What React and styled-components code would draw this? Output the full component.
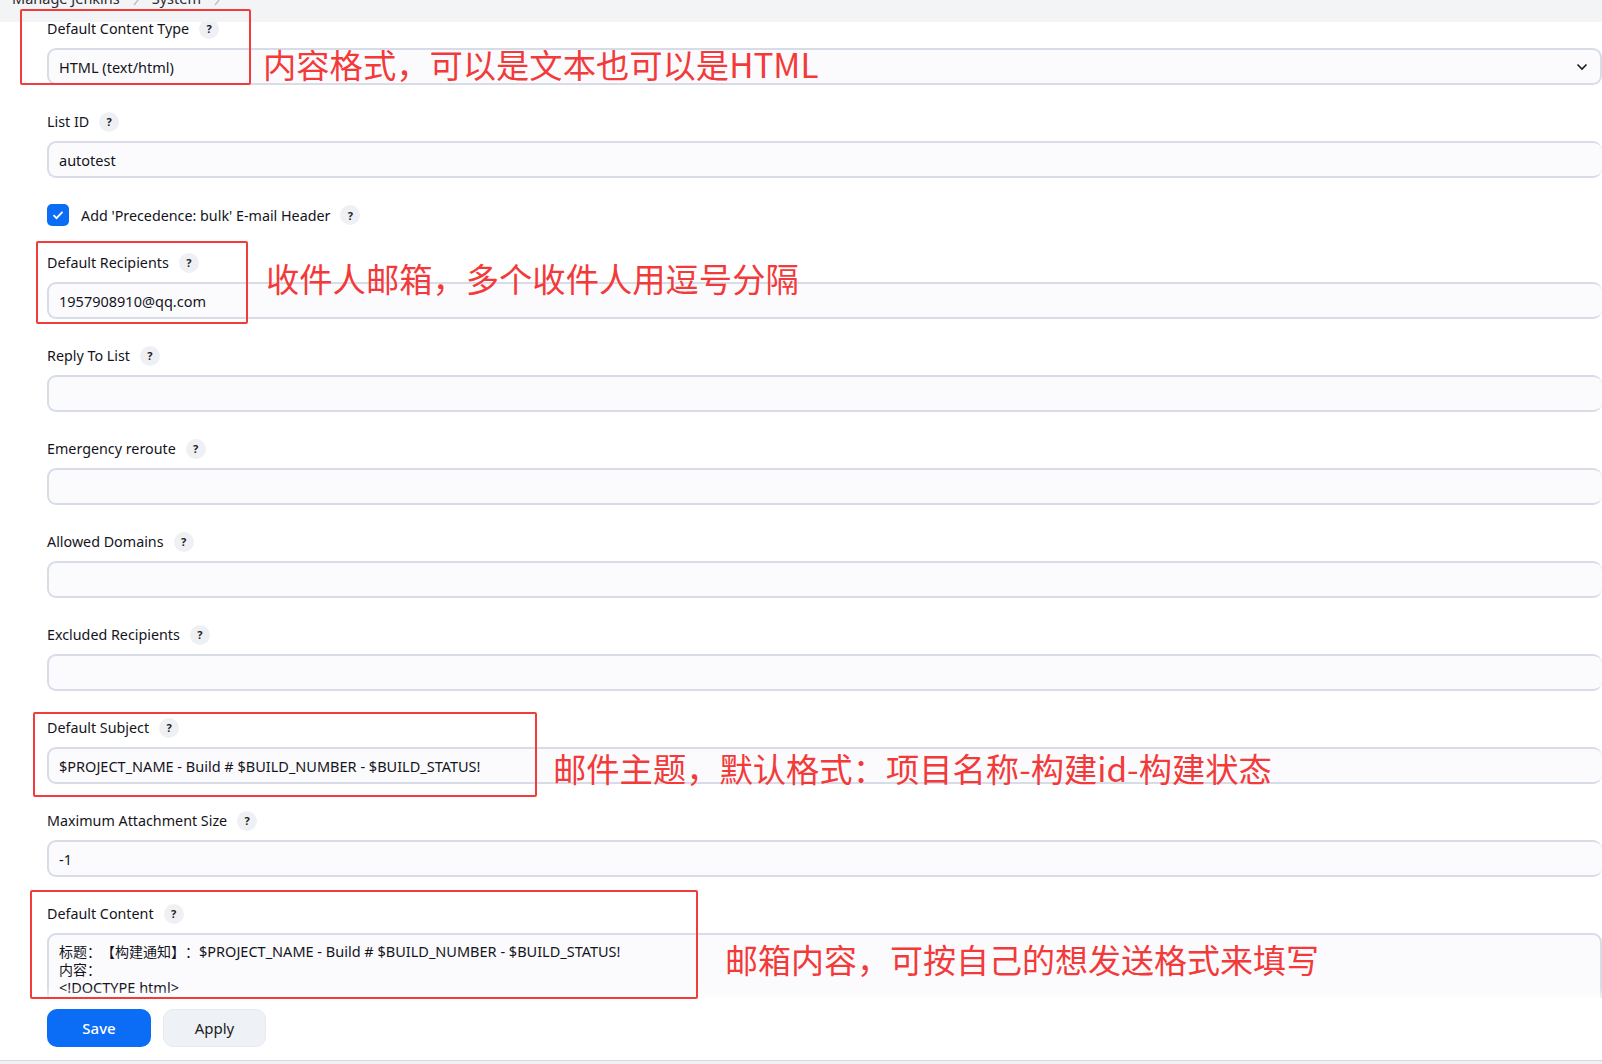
import React from "react";
import styled, { createGlobalStyle } from "styled-components";

const GlobalStyle = createGlobalStyle`
  html, body {
    margin: 0;
    padding: 0;
    background: #fff;
    overflow: hidden;
  }
  body {
    font-family: "Noto Sans", "Noto Sans CJK SC", sans-serif;
    color: #14141c;
    text-spacing-trim: space-all;
  }
  * { box-sizing: border-box; }
`;

const Page = styled.div`
  position: relative;
  width: 1602px;
  height: 1064px;
  overflow: hidden;
  display: flex;
  flex-direction: column;
  background: #fff;
`;

const Breadcrumbs = styled.div`
  height: 22px;
  flex-shrink: 0;
  background: #f3f4f6;
  display: flex;
  align-items: flex-start;
  gap: 12px;
  padding-left: 12px;
  overflow: hidden;
`;

const Crumb = styled.span`
  margin-top: -12px;
  font-size: 14.5px;
  line-height: 20px;
  color: #2a2a33;
`;

const CrumbSep = styled.svg`
  margin-top: -6px;
  width: 8px;
  height: 12px;
`;

const Main = styled.div`
  flex: 1;
  min-height: 0;
  overflow: hidden;
  padding-left: 47px;
  display: flex;
  flex-direction: column;
  gap: 30px;
`;

const Field = styled.div`
  display: flex;
  flex-direction: column;
  gap: 12px;
`;

const LabelRow = styled.div`
  height: 14px;
  display: flex;
  align-items: center;
  gap: 10px;
  font-size: 14.3px;
  line-height: 14px;
  color: #14141c;
`;

const Help = styled.span`
  width: 20px;
  height: 20px;
  border-radius: 50%;
  background: #eef0f4;
  display: inline-flex;
  align-items: center;
  justify-content: center;
  font-size: 11px;
  font-weight: 700;
  color: #222;
  flex-shrink: 0;
`;

const Box = styled.div`
  position: relative;
  height: 37px;
  border: 2px solid #d8dce7;
  border-right: ${({ $open }) => ($open ? "none" : "2px solid #d8dce7")};
  border-radius: 9px;
  background: #fbfbfd;
  padding: 0 10px;
  display: flex;
  align-items: center;
  font-size: 14.5px;
  color: #14141c;
  white-space: pre;
`;

const Chevron = styled.svg`
  margin-left: auto;
  margin-right: 2px;
  width: 12px;
  height: 8px;
`;

const TextArea = styled.div`
  height: 120px;
  border: 2px solid #d8dce7;
  border-radius: 9px;
  background: #fbfbfd;
  padding: 7px 10px;
  font-size: 14.5px;
  line-height: 18px;
  white-space: pre;
  color: #14141c;
`;

const Han = styled.span`
  font-family: "Noto Sans CJK SC", sans-serif;
  font-size: 14px;
  text-spacing-trim: space-all;
`;

const CheckRow = styled.label`
  height: 22px;
  margin-top: -4px;
  display: flex;
  align-items: center;
  gap: 10px;
  font-size: 14.3px;
`;

const Check = styled.span`
  width: 22px;
  height: 22px;
  border-radius: 5px;
  background: #0b6cf5;
  display: inline-flex;
  align-items: center;
  justify-content: center;
  margin-right: 2px;
`;

const Footer = styled.div`
  position: relative;
  height: 66px;
  flex-shrink: 0;
  background: #fff;
  border-bottom: 3px solid #f1f1f3;
  box-shadow: inset 0 -1px 0 #d9d9dd;
`;

const Fade = styled.div`
  position: absolute;
  left: 0;
  right: 0;
  top: -10px;
  height: 10px;
  background: linear-gradient(to bottom, rgba(255, 255, 255, 0), rgba(255, 255, 255, 0.6));
`;

const ButtonBar = styled.div`
  padding: 11px 0 0 47px;
  display: flex;
  gap: 12px;
`;

const Button = styled.button`
  width: ${({ $primary }) => ($primary ? 104 : 103)}px;
  height: 38px;
  border-radius: 10px;
  border: ${({ $primary }) => ($primary ? "none" : "1px solid #e7eaef")};
  background: ${({ $primary }) => ($primary ? "#0b6cf5" : "#eef1f5")};
  color: ${({ $primary }) => ($primary ? "#fff" : "#1b1b22")};
  font-family: "Noto Sans", sans-serif;
  font-size: 15px;
  font-weight: ${({ $primary }) => ($primary ? 500 : 400)};
`;

const RedBox = styled.div`
  position: absolute;
  left: ${({ $x }) => $x}px;
  top: ${({ $y }) => $y}px;
  width: ${({ $w }) => $w}px;
  height: ${({ $h }) => $h}px;
  border: 2px solid #f23b3b;
  border-radius: 2px;
  pointer-events: none;
`;

const Note = styled.div`
  position: absolute;
  left: ${({ $x }) => $x}px;
  top: ${({ $y }) => $y - 20}px;
  font-family: "Noto Sans CJK SC", "Noto Sans", sans-serif;
  font-size: ${({ $size }) => $size || 33.3}px;
  line-height: 40px;
  color: #f33a3a;
  white-space: nowrap;
`;

const fields = [
  { label: "Reply To List", value: "" },
  { label: "Emergency reroute", value: "" },
  { label: "Allowed Domains", value: "" },
  { label: "Excluded Recipients", value: "" },
  { label: "Default Subject", value: "$PROJECT_NAME - Build # $BUILD_NUMBER - $BUILD_STATUS!" },
  { label: "Maximum Attachment Size", value: "-1" },
];

const boxes = [
  { x: 20, y: 9, w: 231, h: 76 },
  { x: 36, y: 241, w: 212, h: 83 },
  { x: 33, y: 712, w: 504, h: 85 },
  { x: 30, y: 890, w: 668, h: 109 },
];

const notes = [
  { x: 263, y: 64, text: "内容格式，可以是文本也可以是HTML" },
  { x: 266, y: 278, text: "收件人邮箱，多个收件人用逗号分隔" },
  { x: 553, y: 768, text: "邮件主题，默认格式：项目名称-构建id-构建状态" },
  { x: 725, y: 959, text: "邮箱内容，可按自己的想发送格式来填写", size: 33 },
];

const Label = ({ children }) => (
  <LabelRow>
    {children}
    <Help>?</Help>
  </LabelRow>
);

const Sep = () => (
  <CrumbSep viewBox="0 0 8 12">
    <path d="M2 1l4 5-4 5" fill="none" stroke="#b9bcc4" strokeWidth="1.3" />
  </CrumbSep>
);

export default function App() {
  return (
    <Page>
      <GlobalStyle />
      <Breadcrumbs>
        <Crumb>Manage Jenkins</Crumb>
        <Sep />
        <Crumb>System</Crumb>
        <Sep />
      </Breadcrumbs>

      <Main>
        <Field>
          <Label>Default Content Type</Label>
          <Box>
            HTML (text/html)
            <Chevron viewBox="0 0 12 8">
              <path d="M1.5 1.5l4.5 4.5 4.5-4.5" fill="none" stroke="#1b1b22" strokeWidth="1.6" />
            </Chevron>
          </Box>
        </Field>
        <Field>
          <Label>List ID</Label>
          <Box $open>autotest</Box>
        </Field>
        <CheckRow>
          <Check>
            <svg width="12" height="10" viewBox="0 0 12 10">
              <path d="M1.5 5.2l3 3 6-6.4" fill="none" stroke="#fff" strokeWidth="1.8" />
            </svg>
          </Check>
          Add 'Precedence: bulk' E-mail Header
          <Help>?</Help>
        </CheckRow>
        <Field>
          <Label>Default Recipients</Label>
          <Box $open>1957908910@qq.com</Box>
        </Field>
        {fields.map((f) => (
          <Field key={f.label}>
            <Label>{f.label}</Label>
            <Box $open>{f.value}</Box>
          </Field>
        ))}
        <Field>
          <Label>Default Content</Label>
          <TextArea>
            <Han>标题：【构建通知】：</Han>
            {"$PROJECT_NAME - Build # $BUILD_NUMBER - $BUILD_STATUS!\n"}
            <Han>内容：</Han>
            {"\n<!DOCTYPE html>\n<html>"}
          </TextArea>
        </Field>
      </Main>

      <Footer>
        <Fade />
        <ButtonBar>
          <Button $primary>Save</Button>
          <Button>Apply</Button>
        </ButtonBar>
      </Footer>

      {boxes.map((b, i) => (
        <RedBox key={i} $x={b.x} $y={b.y} $w={b.w} $h={b.h} />
      ))}
      {notes.map((n, i) => (
        <Note key={i} $x={n.x} $y={n.y} $size={n.size}>
          {n.text}
        </Note>
      ))}
    </Page>
  );
}
